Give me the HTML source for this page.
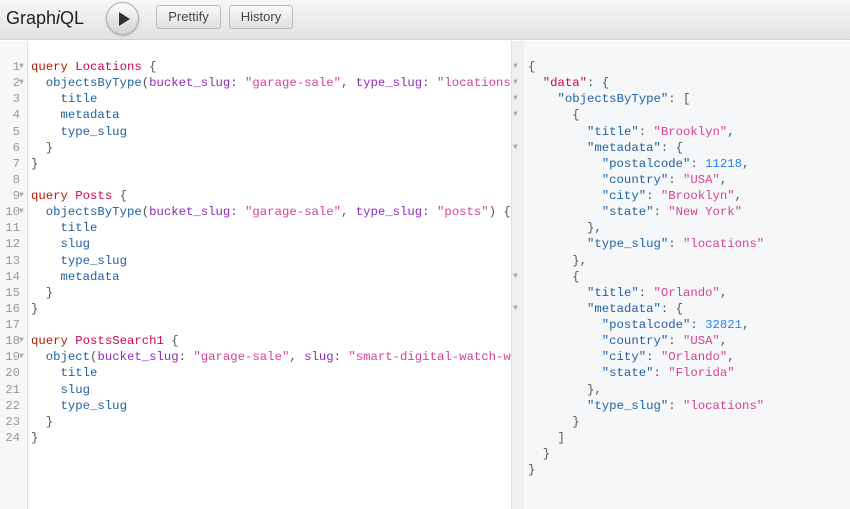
<!DOCTYPE html>
<html><head><meta charset="utf-8"><style>
*{margin:0;padding:0;box-sizing:border-box}
body{width:850px;height:509px;overflow:hidden;background:#fff;font-family:"Liberation Sans",sans-serif;position:relative}
.top{position:absolute;left:0;top:0;width:850px;height:40px;background:linear-gradient(#f7f7f7,#e2e2e2);border-bottom:1px solid #d0d0d0}
.title{position:absolute;left:6px;top:8px;font-size:18px;color:#222}
.run{position:absolute;left:106px;top:2px;width:33px;height:33px;border-radius:50%;background:linear-gradient(#fdfdfd,#d2d3d6);border:1px solid #aaa;box-shadow:0 1px 2px rgba(0,0,0,.2)}
.run:after{content:"";position:absolute;left:12px;top:9px;border-left:11px solid #333;border-top:7px solid transparent;border-bottom:7px solid transparent}
.btn{position:absolute;top:5px;height:24px;border:1px solid #bbb;border-radius:3px;background:linear-gradient(#f9f9f9,#e0e0e0);font-size:13px;color:#444;line-height:22px;text-align:center}
.gut{position:absolute;left:0;top:41px;width:28px;height:468px;background:#f6f7f8;border-right:1px solid #e0e0e0}
.res{position:absolute;left:511px;top:41px;width:339px;height:468px;background:#f6f7f8}
.resg{position:absolute;left:511px;top:41px;width:13px;height:468px;background:#eeeff0;border-left:1px solid #e0e0e0}
pre{position:absolute;font-family:"Liberation Mono",monospace;font-size:12.3px;line-height:16.13px;color:#555;white-space:pre}
.ln{left:0;width:20px;text-align:right;color:#999;top:59px}
.k{color:#b11a04}.d{color:#d2054e}.p{color:#1f61a0}.a{color:#8b2bb9}.s{color:#d64292}.n{color:#2882f9}
</style></head><body>
<div class="top"><div class="title">Graph<i>i</i>QL</div><div class="run"></div>
<div class="btn" style="left:156px;width:65px">Prettify</div><div class="btn" style="left:229px;width:64px">History</div></div>
<div class="gut"></div>
<div class="res"></div><div class="resg"></div>
<pre class="ln">1
2
3
4
5
6
7
8
9
10
11
12
13
14
15
16
17
18
19
20
21
22
23
24</pre>
<pre style="left:19px;top:59px;color:#aaa;font-size:8px;line-height:16.13px">▼
▼






▼
▼







▼
▼</pre>
<div style="position:absolute;left:31px;top:59px;width:480px;height:420px;overflow:hidden"><pre style="left:0;top:0"><span class="k">query</span> <span class="d">Locations</span> {
  <span class="p">objectsByType</span>(<span class="a">bucket_slug</span>: <span class="s">"garage-sale"</span>, <span class="a">type_slug</span>: <span class="s">"locations"</span>) {
    <span class="p">title</span>
    <span class="p">metadata</span>
    <span class="p">type_slug</span>
  }
}

<span class="k">query</span> <span class="d">Posts</span> {
  <span class="p">objectsByType</span>(<span class="a">bucket_slug</span>: <span class="s">"garage-sale"</span>, <span class="a">type_slug</span>: <span class="s">"posts"</span>) {
    <span class="p">title</span>
    <span class="p">slug</span>
    <span class="p">type_slug</span>
    <span class="p">metadata</span>
  }
}

<span class="k">query</span> <span class="d">PostsSearch1</span> {
  <span class="p">object</span>(<span class="a">bucket_slug</span>: <span class="s">"garage-sale"</span>, <span class="a">slug</span>: <span class="s">"smart-digital-watch-white"</span>) {
    <span class="p">title</span>
    <span class="p">slug</span>
    <span class="p">type_slug</span>
  }
}</pre></div>
<pre style="left:513px;top:59px;color:#aaa;font-size:8px;line-height:16.13px">▼
▼
▼
▼

▼







▼

▼</pre>
<pre style="left:528px;top:59px">{
  <span class="d">"data"</span>: {
    <span class="p">"objectsByType"</span>: [
      {
        <span class="p">"title"</span>: <span class="s">"Brooklyn"</span>,
        <span class="p">"metadata"</span>: {
          <span class="p">"postalcode"</span>: <span class="n">11218</span>,
          <span class="p">"country"</span>: <span class="s">"USA"</span>,
          <span class="p">"city"</span>: <span class="s">"Brooklyn"</span>,
          <span class="p">"state"</span>: <span class="s">"New York"</span>
        },
        <span class="p">"type_slug"</span>: <span class="s">"locations"</span>
      },
      {
        <span class="p">"title"</span>: <span class="s">"Orlando"</span>,
        <span class="p">"metadata"</span>: {
          <span class="p">"postalcode"</span>: <span class="n">32821</span>,
          <span class="p">"country"</span>: <span class="s">"USA"</span>,
          <span class="p">"city"</span>: <span class="s">"Orlando"</span>,
          <span class="p">"state"</span>: <span class="s">"Florida"</span>
        },
        <span class="p">"type_slug"</span>: <span class="s">"locations"</span>
      }
    ]
  }
}</pre>
</body></html>
